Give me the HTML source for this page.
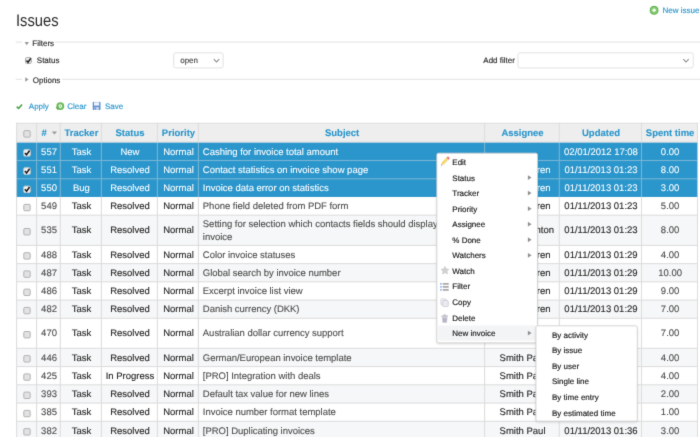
<!DOCTYPE html>
<html><head><meta charset="utf-8"><title>Issues</title>
<style>
html,body{margin:0;padding:0;background:#fff;overflow:hidden;}
#w{left:-12px;top:-12px;width:724px;height:461px;background:#fff;filter:url(#soft);}
#p{left:12px;top:12px;width:700px;height:437px;}
body{width:700px;height:437px;overflow:hidden;position:relative;font-family:"Liberation Sans",sans-serif;font-size:8px;line-height:20px;color:#333;text-rendering:geometricPrecision;}
div,span,a,h2{position:absolute;left:0;top:0;white-space:nowrap;margin:0;}
svg.L{position:absolute;left:0;top:0;}
a{color:#2996cc;text-decoration:none;}
.s8{font-size:8px;color:#262626;-webkit-text-stroke:0.14px;}
.t{font-size:9.5px;color:#262626;-webkit-text-stroke:0.12px #262626;}
.sj{font-size:9.5px;color:#4c4c4c;letter-spacing:-0.02px;-webkit-text-stroke:0.1px #4c4c4c;}
.w{font-size:9.5px;color:#fff;letter-spacing:-0.01px;-webkit-text-stroke:0.07px #fff;}
.id{font-size:9.5px;color:#4c4c4c;-webkit-text-stroke:0.1px #4c4c4c;}
.th{font-size:9.5px;font-weight:bold;color:#2996cc;-webkit-text-stroke:0.1px #2996cc;}
.m{font-size:8px;color:#161616;-webkit-text-stroke:0.15px #161616;}
</style></head><body>
<svg width="0" height="0" style="position:absolute"><defs><filter id="soft" x="0" y="0" width="100%" height="100%" color-interpolation-filters="sRGB"><feConvolveMatrix order="3" kernelMatrix="0.01134 0.08382 0.01134 0.08382 0.61935 0.08382 0.01134 0.08382 0.01134" edgeMode="duplicate" preserveAlpha="true"/></filter></defs></svg>
<div id="w"><div id="p">

<svg class="L" width="712" height="449" viewBox="0 0 712 449">
<svg x="649.4" y="5.6" width="9.4" height="9.4" viewBox="0 0 16 16"><circle cx="8" cy="8" r="7.7" fill="#62b04f"/><circle cx="8" cy="8" r="6" fill="#84ca70"/><path d="M8 4.9v6.2M4.9 8h6.2" stroke="#fff" stroke-width="2.3" fill="none"/></svg>
<rect x="15.7" y="41.6" width="694.3" height="0.9" fill="#dedede"/>
<rect x="22" y="37" width="33" height="11" fill="#fff"/>
<polygon points="24.55,42 28.95,42 26.75,45.2" fill="#999"/>
<rect x="25.5" y="57.6" width="5.8" height="5.8" rx="1.1" fill="#eee" stroke="#a8a8a8" stroke-width="1"/>
<svg x="24.9" y="56.7" width="7.4" height="7.4" viewBox="0 0 10 10"><path d="M2.1 5.1l2.1 2.4 3.8-5.3" stroke="#1a1a1a" stroke-width="1.9" fill="none"/></svg>
<rect x="173.65" y="52.75" width="49.5" height="15.2" rx="2.2" fill="#fff" stroke="#dfdfdf" stroke-width="0.9"/>
<svg x="213" y="58.4" width="7" height="5" viewBox="0 0 7 5"><path d="M0.8 0.8L3.5 3.7L6.2 0.8" stroke="#858585" stroke-width="1.05" fill="none"/></svg>
<rect x="517.95" y="52.75" width="175.3" height="15.2" rx="2.2" fill="#fff" stroke="#dfdfdf" stroke-width="0.9"/>
<svg x="682.5" y="58.4" width="7" height="5" viewBox="0 0 7 5"><path d="M0.8 0.8L3.5 3.7L6.2 0.8" stroke="#858585" stroke-width="1.05" fill="none"/></svg>
<rect x="15.7" y="78.8" width="694.3" height="0.9" fill="#dedede"/>
<rect x="22" y="73" width="40" height="11" fill="#fff"/>
<polygon points="25.25,77.3 25.25,81.7 28.55,79.5" fill="#999"/>
<svg x="15.7" y="103.7" width="7.4" height="5.6" viewBox="0 0 10 8"><path d="M1.2 4.2l2.6 2.6 5-5.6" stroke="#4aa54a" stroke-width="2.3" fill="none"/></svg>
<circle cx="60.3" cy="106.1" r="2.9" fill="#fff" stroke="#6fbb5e" stroke-width="2.1"/><circle cx="60.3" cy="106.1" r="0.8" fill="#6fbb5e"/><polygon points="55.6,107.2 59.0,106.6 57.8,110.2" fill="#5fae50"/>
<svg x="92.5" y="101.8" width="8.2" height="8.2" viewBox="0 0 12 12"><rect x="0" y="0" width="12" height="12" rx="1.2" fill="#5a8ed4"/><rect x="2.2" y="0.6" width="7.6" height="5" fill="#eef3fb"/><rect x="2.6" y="7.6" width="6.8" height="4.4" fill="#c2d2ea"/><rect x="3.4" y="8.4" width="1.8" height="2.8" fill="#5a8ed4"/></svg>
<rect x="16.6" y="123.3" width="680.9" height="19.2" fill="#eee"/>
<rect x="16.6" y="142.65" width="680.9" height="18.15" fill="#2b96cc"/>
<rect x="16.6" y="160.5" width="680.9" height="18.6" fill="#2b96cc"/>
<rect x="16.6" y="178.8" width="680.9" height="18.1" fill="#2b96cc"/>
<rect x="16.6" y="215.2" width="680.9" height="30.2" fill="#f6f7f8"/>
<rect x="16.6" y="263.6" width="680.9" height="18.2" fill="#f6f7f8"/>
<rect x="16.6" y="300.1" width="680.9" height="18.2" fill="#f6f7f8"/>
<rect x="16.6" y="348.3" width="680.9" height="18.25" fill="#f6f7f8"/>
<rect x="16.6" y="384.8" width="680.9" height="18.25" fill="#f6f7f8"/>
<rect x="16.6" y="421.3" width="680.9" height="18.25" fill="#f6f7f8"/>
<rect x="16.05" y="122.75" width="682" height="1.1" fill="#dedede"/>
<rect x="16.05" y="141.55" width="682" height="1.1" fill="#dedede"/>
<rect x="16.05" y="159.95" width="682" height="1.1" fill="#dedede"/>
<rect x="16.05" y="178.25" width="682" height="1.1" fill="#dedede"/>
<rect x="16.05" y="214.65" width="682" height="1.1" fill="#dedede"/>
<rect x="16.05" y="244.85" width="682" height="1.1" fill="#dedede"/>
<rect x="16.05" y="263.05" width="682" height="1.1" fill="#dedede"/>
<rect x="16.05" y="281.25" width="682" height="1.1" fill="#dedede"/>
<rect x="16.05" y="299.55" width="682" height="1.1" fill="#dedede"/>
<rect x="16.05" y="317.75" width="682" height="1.1" fill="#dedede"/>
<rect x="16.05" y="347.75" width="682" height="1.1" fill="#dedede"/>
<rect x="16.05" y="366" width="682" height="1.1" fill="#dedede"/>
<rect x="16.05" y="384.25" width="682" height="1.1" fill="#dedede"/>
<rect x="16.05" y="402.5" width="682" height="1.1" fill="#dedede"/>
<rect x="16.05" y="420.75" width="682" height="1.1" fill="#dedede"/>
<rect x="16.05" y="439" width="682" height="1.1" fill="#dedede"/>
<rect x="16.05" y="122.75" width="1.1" height="320" fill="#dedede"/>
<rect x="36.05" y="122.75" width="1.1" height="320" fill="#dedede"/>
<rect x="59.75" y="122.75" width="1.1" height="320" fill="#dedede"/>
<rect x="100.85" y="122.75" width="1.1" height="320" fill="#dedede"/>
<rect x="156.85" y="122.75" width="1.1" height="320" fill="#dedede"/>
<rect x="197.85" y="122.75" width="1.1" height="320" fill="#dedede"/>
<rect x="484.05" y="122.75" width="1.1" height="320" fill="#dedede"/>
<rect x="558.75" y="122.75" width="1.1" height="320" fill="#dedede"/>
<rect x="640.95" y="122.75" width="1.1" height="320" fill="#dedede"/>
<rect x="696.95" y="122.75" width="1.1" height="320" fill="#dedede"/>
<rect x="16.6" y="142.65" width="680.9" height="54.25" fill="#2b96cc" opacity="0.58"/>
<polygon points="51.8,131.4 57,131.4 54.4,134.4" fill="#999"/>
<rect x="23.8" y="130.7" width="6.4" height="6.4" rx="1.1" fill="#e2e2e2" stroke="#b2b2b2" stroke-width="1"/>
<rect x="23.8" y="149.7" width="6.4" height="6.4" rx="1.1" fill="#f4f4f4" stroke="#d0d0d0" stroke-width="1"/>
<svg x="23.2" y="148.8" width="8" height="8" viewBox="0 0 10 10"><path d="M2.1 5.1l2.1 2.4 3.8-5.3" stroke="#1a1a1a" stroke-width="1.9" fill="none"/></svg>
<rect x="23.8" y="167.85" width="6.4" height="6.4" rx="1.1" fill="#f4f4f4" stroke="#d0d0d0" stroke-width="1"/>
<svg x="23.2" y="166.95" width="8" height="8" viewBox="0 0 10 10"><path d="M2.1 5.1l2.1 2.4 3.8-5.3" stroke="#1a1a1a" stroke-width="1.9" fill="none"/></svg>
<rect x="23.8" y="186.15" width="6.4" height="6.4" rx="1.1" fill="#f4f4f4" stroke="#d0d0d0" stroke-width="1"/>
<svg x="23.2" y="185.25" width="8" height="8" viewBox="0 0 10 10"><path d="M2.1 5.1l2.1 2.4 3.8-5.3" stroke="#1a1a1a" stroke-width="1.9" fill="none"/></svg>
<rect x="23.8" y="204.35" width="6.4" height="6.4" rx="1.1" fill="#e2e2e2" stroke="#b2b2b2" stroke-width="1"/>
<rect x="23.8" y="228.5" width="6.4" height="6.4" rx="1.1" fill="#e2e2e2" stroke="#b2b2b2" stroke-width="1"/>
<rect x="23.8" y="252.7" width="6.4" height="6.4" rx="1.1" fill="#e2e2e2" stroke="#b2b2b2" stroke-width="1"/>
<rect x="23.8" y="270.9" width="6.4" height="6.4" rx="1.1" fill="#e2e2e2" stroke="#b2b2b2" stroke-width="1"/>
<rect x="23.8" y="289.15" width="6.4" height="6.4" rx="1.1" fill="#e2e2e2" stroke="#b2b2b2" stroke-width="1"/>
<rect x="23.8" y="307.4" width="6.4" height="6.4" rx="1.1" fill="#e2e2e2" stroke="#b2b2b2" stroke-width="1"/>
<rect x="23.8" y="331.5" width="6.4" height="6.4" rx="1.1" fill="#e2e2e2" stroke="#b2b2b2" stroke-width="1"/>
<rect x="23.8" y="355.62" width="6.4" height="6.4" rx="1.1" fill="#e2e2e2" stroke="#b2b2b2" stroke-width="1"/>
<rect x="23.8" y="373.88" width="6.4" height="6.4" rx="1.1" fill="#e2e2e2" stroke="#b2b2b2" stroke-width="1"/>
<rect x="23.8" y="392.12" width="6.4" height="6.4" rx="1.1" fill="#e2e2e2" stroke="#b2b2b2" stroke-width="1"/>
<rect x="23.8" y="410.38" width="6.4" height="6.4" rx="1.1" fill="#e2e2e2" stroke="#b2b2b2" stroke-width="1"/>
<rect x="23.8" y="428.62" width="6.4" height="6.4" rx="1.1" fill="#e2e2e2" stroke="#b2b2b2" stroke-width="1"/>
</svg>
<h2 style="font-size:16.8px;font-weight:normal;color:#2a2a2a;transform-origin:0 0;left:16px;top:0;transform:translateY(10.8px) scaleX(0.88);">Issues</h2>
<a class="s8" style="left:662.6px;top:1px;color:#2996cc;">New issue</a>
<div class="s8" style="left:32.3px;top:34px;">Filters</div>
<div class="s8" style="left:36.8px;top:51px;">Status</div>
<div class="s8" style="left:180.2px;top:51px;color:#444;">open</div>
<div class="s8" style="left:483.3px;top:51px;">Add filter</div>
<div class="s8" style="left:32.8px;top:71px;">Options</div>
<a class="s8" style="left:28.8px;top:97px;color:#2996cc;">Apply</a>
<a class="s8" style="left:67.3px;top:97px;color:#2996cc;">Clear</a>
<a class="s8" style="left:105px;top:97px;color:#2996cc;">Save</a>
<div class="th" style="left:41.5px;top:124px;">#</div>
<div class="th" style="left:60.9px;top:124px;width:41.1px;text-align:center;">Tracker</div>
<div class="th" style="left:102px;top:124px;width:56px;text-align:center;">Status</div>
<div class="th" style="left:158px;top:124px;width:41px;text-align:center;">Priority</div>
<div class="th" style="left:199px;top:124px;width:286.2px;text-align:center;">Subject</div>
<div class="th" style="left:485.2px;top:124px;width:74.7px;text-align:center;">Assignee</div>
<div class="th" style="left:559.9px;top:124px;width:82.2px;text-align:center;">Updated</div>
<div class="th" style="left:642.1px;top:124px;width:56px;text-align:center;">Spent time</div>
<div class="w" style="left:37.2px;top:143px;width:23.7px;text-align:center;">557</div>
<div class="w" style="left:60.9px;top:143px;width:41.1px;text-align:center;">Task</div>
<div class="w" style="left:102px;top:143px;width:56px;text-align:center;">New</div>
<div class="w" style="left:158px;top:143px;width:41px;text-align:center;">Normal</div>
<div class="w" style="left:202.8px;top:143px;">Cashing for invoice total amount</div>
<div class="w" style="left:559.9px;top:143px;width:82.2px;text-align:center;">02/01/2012 17:08</div>
<div class="w" style="left:642.1px;top:143px;width:56px;text-align:center;">0.00</div>
<div class="w" style="left:37.2px;top:161px;width:23.7px;text-align:center;">551</div>
<div class="w" style="left:60.9px;top:161px;width:41.1px;text-align:center;">Task</div>
<div class="w" style="left:102px;top:161px;width:56px;text-align:center;">Resolved</div>
<div class="w" style="left:158px;top:161px;width:41px;text-align:center;">Normal</div>
<div class="w" style="left:202.8px;top:161px;">Contact statistics on invoice show page</div>
<div class="w" style="left:485.2px;top:161px;width:74.7px;text-align:center;">Smith Darren</div>
<div class="w" style="left:559.9px;top:161px;width:82.2px;text-align:center;">01/11/2013 01:23</div>
<div class="w" style="left:642.1px;top:161px;width:56px;text-align:center;">8.00</div>
<div class="w" style="left:37.2px;top:179px;width:23.7px;text-align:center;">550</div>
<div class="w" style="left:60.9px;top:179px;width:41.1px;text-align:center;">Bug</div>
<div class="w" style="left:102px;top:179px;width:56px;text-align:center;">Resolved</div>
<div class="w" style="left:158px;top:179px;width:41px;text-align:center;">Normal</div>
<div class="w" style="left:202.8px;top:179px;">Invoice data error on statistics</div>
<div class="w" style="left:485.2px;top:179px;width:74.7px;text-align:center;">Smith Darren</div>
<div class="w" style="left:559.9px;top:179px;width:82.2px;text-align:center;">01/11/2013 01:23</div>
<div class="w" style="left:642.1px;top:179px;width:56px;text-align:center;">3.00</div>
<div class="id" style="left:37.2px;top:197px;width:23.7px;text-align:center;">549</div>
<div class="t" style="left:60.9px;top:197px;width:41.1px;text-align:center;">Task</div>
<div class="t" style="left:102px;top:197px;width:56px;text-align:center;">Resolved</div>
<div class="t" style="left:158px;top:197px;width:41px;text-align:center;">Normal</div>
<div class="sj" style="left:202.8px;top:197px;">Phone field deleted from PDF form</div>
<div class="t" style="left:485.2px;top:197px;width:74.7px;text-align:center;">Smith Darren</div>
<div class="t" style="left:559.9px;top:197px;width:82.2px;text-align:center;">01/11/2013 01:23</div>
<div class="id" style="left:642.1px;top:197px;width:56px;text-align:center;">5.00</div>
<div class="id" style="left:37.2px;top:221px;width:23.7px;text-align:center;">535</div>
<div class="t" style="left:60.9px;top:221px;width:41.1px;text-align:center;">Task</div>
<div class="t" style="left:102px;top:221px;width:56px;text-align:center;">Resolved</div>
<div class="t" style="left:158px;top:221px;width:41px;text-align:center;">Normal</div>
<div class="sj" style="left:202.8px;top:215px;">Setting for selection which contacts fields should display in</div>
<div class="sj" style="left:202.8px;top:228px;">invoice</div>
<div class="t" style="left:485.2px;top:221px;width:74.7px;text-align:center;">Johnson Anton</div>
<div class="t" style="left:559.9px;top:221px;width:82.2px;text-align:center;">01/11/2013 01:23</div>
<div class="id" style="left:642.1px;top:221px;width:56px;text-align:center;">8.00</div>
<div class="id" style="left:37.2px;top:246px;width:23.7px;text-align:center;">488</div>
<div class="t" style="left:60.9px;top:246px;width:41.1px;text-align:center;">Task</div>
<div class="t" style="left:102px;top:246px;width:56px;text-align:center;">Resolved</div>
<div class="t" style="left:158px;top:246px;width:41px;text-align:center;">Normal</div>
<div class="sj" style="left:202.8px;top:246px;">Color invoice statuses</div>
<div class="t" style="left:485.2px;top:246px;width:74.7px;text-align:center;">Smith Darren</div>
<div class="t" style="left:559.9px;top:246px;width:82.2px;text-align:center;">01/11/2013 01:29</div>
<div class="id" style="left:642.1px;top:246px;width:56px;text-align:center;">4.00</div>
<div class="id" style="left:37.2px;top:264px;width:23.7px;text-align:center;">487</div>
<div class="t" style="left:60.9px;top:264px;width:41.1px;text-align:center;">Task</div>
<div class="t" style="left:102px;top:264px;width:56px;text-align:center;">Resolved</div>
<div class="t" style="left:158px;top:264px;width:41px;text-align:center;">Normal</div>
<div class="sj" style="left:202.8px;top:264px;">Global search by invoice number</div>
<div class="t" style="left:485.2px;top:264px;width:74.7px;text-align:center;">Smith Darren</div>
<div class="t" style="left:559.9px;top:264px;width:82.2px;text-align:center;">01/11/2013 01:29</div>
<div class="id" style="left:642.1px;top:264px;width:56px;text-align:center;">10.00</div>
<div class="id" style="left:37.2px;top:282px;width:23.7px;text-align:center;">486</div>
<div class="t" style="left:60.9px;top:282px;width:41.1px;text-align:center;">Task</div>
<div class="t" style="left:102px;top:282px;width:56px;text-align:center;">Resolved</div>
<div class="t" style="left:158px;top:282px;width:41px;text-align:center;">Normal</div>
<div class="sj" style="left:202.8px;top:282px;">Excerpt invoice list view</div>
<div class="t" style="left:485.2px;top:282px;width:74.7px;text-align:center;">Smith Darren</div>
<div class="t" style="left:559.9px;top:282px;width:82.2px;text-align:center;">01/11/2013 01:29</div>
<div class="id" style="left:642.1px;top:282px;width:56px;text-align:center;">9.00</div>
<div class="id" style="left:37.2px;top:300px;width:23.7px;text-align:center;">482</div>
<div class="t" style="left:60.9px;top:300px;width:41.1px;text-align:center;">Task</div>
<div class="t" style="left:102px;top:300px;width:56px;text-align:center;">Resolved</div>
<div class="t" style="left:158px;top:300px;width:41px;text-align:center;">Normal</div>
<div class="sj" style="left:202.8px;top:300px;">Danish currency (DKK)</div>
<div class="t" style="left:485.2px;top:300px;width:74.7px;text-align:center;">Smith Darren</div>
<div class="t" style="left:559.9px;top:300px;width:82.2px;text-align:center;">01/11/2013 01:29</div>
<div class="id" style="left:642.1px;top:300px;width:56px;text-align:center;">7.00</div>
<div class="id" style="left:37.2px;top:324px;width:23.7px;text-align:center;">470</div>
<div class="t" style="left:60.9px;top:324px;width:41.1px;text-align:center;">Task</div>
<div class="t" style="left:102px;top:324px;width:56px;text-align:center;">Resolved</div>
<div class="t" style="left:158px;top:324px;width:41px;text-align:center;">Normal</div>
<div class="sj" style="left:202.8px;top:324px;">Australian dollar currency support</div>
<div class="t" style="left:485.2px;top:324px;width:74.7px;text-align:center;">Smith Paul</div>
<div class="t" style="left:559.9px;top:324px;width:82.2px;text-align:center;">01/11/2013 01:29</div>
<div class="id" style="left:642.1px;top:324px;width:56px;text-align:center;">7.00</div>
<div class="id" style="left:37.2px;top:349px;width:23.7px;text-align:center;">446</div>
<div class="t" style="left:60.9px;top:349px;width:41.1px;text-align:center;">Task</div>
<div class="t" style="left:102px;top:349px;width:56px;text-align:center;">Resolved</div>
<div class="t" style="left:158px;top:349px;width:41px;text-align:center;">Normal</div>
<div class="sj" style="left:202.8px;top:349px;">German/European invoice template</div>
<div class="t" style="left:485.2px;top:349px;width:74.7px;text-align:center;">Smith Paul</div>
<div class="t" style="left:559.9px;top:349px;width:82.2px;text-align:center;">01/11/2013 01:29</div>
<div class="id" style="left:642.1px;top:349px;width:56px;text-align:center;">4.00</div>
<div class="id" style="left:37.2px;top:367px;width:23.7px;text-align:center;">425</div>
<div class="t" style="left:60.9px;top:367px;width:41.1px;text-align:center;">Task</div>
<div class="t" style="left:102px;top:367px;width:56px;text-align:center;">In Progress</div>
<div class="t" style="left:158px;top:367px;width:41px;text-align:center;">Normal</div>
<div class="sj" style="left:202.8px;top:367px;">[PRO] Integration with deals</div>
<div class="t" style="left:485.2px;top:367px;width:74.7px;text-align:center;">Smith Paul</div>
<div class="t" style="left:559.9px;top:367px;width:82.2px;text-align:center;">01/11/2013 01:29</div>
<div class="id" style="left:642.1px;top:367px;width:56px;text-align:center;">4.00</div>
<div class="id" style="left:37.2px;top:385px;width:23.7px;text-align:center;">393</div>
<div class="t" style="left:60.9px;top:385px;width:41.1px;text-align:center;">Task</div>
<div class="t" style="left:102px;top:385px;width:56px;text-align:center;">Resolved</div>
<div class="t" style="left:158px;top:385px;width:41px;text-align:center;">Normal</div>
<div class="sj" style="left:202.8px;top:385px;">Default tax value for new lines</div>
<div class="t" style="left:485.2px;top:385px;width:74.7px;text-align:center;">Smith Paul</div>
<div class="t" style="left:559.9px;top:385px;width:82.2px;text-align:center;">01/11/2013 01:29</div>
<div class="id" style="left:642.1px;top:385px;width:56px;text-align:center;">2.00</div>
<div class="id" style="left:37.2px;top:403px;width:23.7px;text-align:center;">385</div>
<div class="t" style="left:60.9px;top:403px;width:41.1px;text-align:center;">Task</div>
<div class="t" style="left:102px;top:403px;width:56px;text-align:center;">Resolved</div>
<div class="t" style="left:158px;top:403px;width:41px;text-align:center;">Normal</div>
<div class="sj" style="left:202.8px;top:403px;">Invoice number format template</div>
<div class="t" style="left:485.2px;top:403px;width:74.7px;text-align:center;">Smith Paul</div>
<div class="t" style="left:559.9px;top:403px;width:82.2px;text-align:center;">01/11/2013 01:29</div>
<div class="id" style="left:642.1px;top:403px;width:56px;text-align:center;">1.00</div>
<div class="id" style="left:37.2px;top:422px;width:23.7px;text-align:center;">382</div>
<div class="t" style="left:60.9px;top:422px;width:41.1px;text-align:center;">Task</div>
<div class="t" style="left:102px;top:422px;width:56px;text-align:center;">Resolved</div>
<div class="t" style="left:158px;top:422px;width:41px;text-align:center;">Normal</div>
<div class="sj" style="left:202.8px;top:422px;">[PRO] Duplicating invoices</div>
<div class="t" style="left:485.2px;top:422px;width:74.7px;text-align:center;">Smith Paul</div>
<div class="t" style="left:559.9px;top:422px;width:82.2px;text-align:center;">01/11/2013 01:36</div>
<div class="id" style="left:642.1px;top:422px;width:56px;text-align:center;">3.00</div>
<svg class="L" width="712" height="449" viewBox="0 0 712 449">
<defs><filter id="sh" x="-10%" y="-10%" width="120%" height="120%"><feGaussianBlur stdDeviation="1.3"/></filter></defs>
<rect x="436.4" y="153.7" width="101.5" height="190.6" rx="1.8" fill="#000" opacity="0.13" filter="url(#sh)"/>
<rect x="436.85" y="153.15" width="100.6" height="189.7" rx="1.6" fill="#fff" stroke="#d2d2d2" stroke-width="0.9"/>
<polygon points="443.46,164.98 448.5,159.68 446.54,157.82 441.5,163.12" fill="#f8de80"/>
<polygon points="442.48,164.05 447.52,158.75 446.54,157.82 441.5,163.12" fill="#f3d062"/>
<polygon points="448.5,159.68 449.88,158.23 447.92,156.37 446.54,157.82" fill="#ee6f7e"/>
<polygon points="441.1,165.5 443.46,164.98 441.5,163.12" fill="#e2cfa4"/>
<polygon points="441.1,165.5 442.04,165.29 441.26,164.55" fill="#555"/>
<polygon points="527.85,175.15 527.85,179.95 531.55,177.55" fill="#909090"/>
<polygon points="527.85,190.7 527.85,195.5 531.55,193.1" fill="#909090"/>
<polygon points="527.85,206.25 527.85,211.05 531.55,208.65" fill="#909090"/>
<polygon points="527.85,221.8 527.85,226.6 531.55,224.2" fill="#909090"/>
<polygon points="527.85,237.35 527.85,242.15 531.55,239.75" fill="#909090"/>
<polygon points="527.85,252.9 527.85,257.7 531.55,255.3" fill="#909090"/>
<svg x="440.6" y="265.85" width="8.8" height="8.8" viewBox="0 0 12 12"><path d="M6 0.8l1.65 3.4 3.7 0.5-2.7 2.6 0.65 3.7L6 9.2 2.7 11l0.65-3.7L0.65 4.7l3.7-0.5z" fill="#d2d2d2" stroke="#bdbdbd" stroke-width="0.7"/></svg>
<svg x="440" y="282.7" width="9" height="8.4" viewBox="0 0 12 11"><rect x="0.3" y="0.6" width="1.8" height="1.8" fill="#5b8fe8"/><rect x="0.3" y="4.6" width="1.8" height="1.8" fill="#5b8fe8"/><rect x="0.3" y="8.6" width="1.8" height="1.8" fill="#5b8fe8"/><rect x="3.6" y="0.9" width="8" height="1.3" fill="#666"/><rect x="3.6" y="4.9" width="8" height="1.3" fill="#666"/><rect x="3.6" y="8.9" width="8" height="1.3" fill="#666"/></svg>
<svg x="440.1" y="298.15" width="9" height="9.2" viewBox="0 0 12 12.5"><rect x="0.8" y="0.8" width="7.4" height="8.4" rx="1.4" fill="#efeff4" stroke="#cfcfda" stroke-width="1.1"/><rect x="3.4" y="3.2" width="7.6" height="8.4" rx="1.4" fill="#ebebf1" stroke="#c9c9d6" stroke-width="1.1"/></svg>
<svg x="440.8" y="314.1" width="7.8" height="9.2" viewBox="0 0 10 12"><rect x="0.6" y="1.8" width="8.8" height="1.6" rx="0.6" fill="#b4b4c2"/><rect x="3.4" y="0.5" width="3.2" height="1.6" rx="0.5" fill="#b4b4c2"/><path d="M1.4 4h7.2l-0.7 7.3H2.1z" fill="#c6c6d2"/><path d="M3.5 5v5.4M5 5v5.4M6.5 5v5.4" stroke="#a4a4b4" stroke-width="0.7"/></svg>
<rect x="438.2" y="325.5" width="98.8" height="15.1" fill="#f3f4f5"/>
<polygon points="527.85,330.65 527.85,335.45 531.55,333.05" fill="#909090"/>
<rect x="535.5" y="326.4" width="102.2" height="96.2" rx="2.5" fill="#000" opacity="0.13" filter="url(#sh)"/>
<rect x="535.95" y="325.85" width="101.3" height="95.3" rx="1.6" fill="#fff" stroke="#d2d2d2" stroke-width="0.9"/>
</svg>
<div class="m" style="left:452.3px;top:153px;">Edit</div>
<div class="m" style="left:452.3px;top:169px;">Status</div>
<div class="m" style="left:452.3px;top:184px;">Tracker</div>
<div class="m" style="left:452.3px;top:200px;">Priority</div>
<div class="m" style="left:452.3px;top:215px;">Assignee</div>
<div class="m" style="left:452.3px;top:231px;">% Done</div>
<div class="m" style="left:452.3px;top:246px;">Watchers</div>
<div class="m" style="left:452.3px;top:262px;">Watch</div>
<div class="m" style="left:452.3px;top:277px;">Filter</div>
<div class="m" style="left:452.3px;top:293px;">Copy</div>
<div class="m" style="left:452.3px;top:309px;">Delete</div>
<div class="m" style="left:452.3px;top:324px;">New invoice</div>
<div class="m" style="left:552px;top:326px;">By activity</div>
<div class="m" style="left:552px;top:341px;">By issue</div>
<div class="m" style="left:552px;top:357px;">By user</div>
<div class="m" style="left:552px;top:372px;">Single line</div>
<div class="m" style="left:552px;top:388px;">By time entry</div>
<div class="m" style="left:552px;top:404px;">By estimated time</div>
</div></div>
</body></html>
